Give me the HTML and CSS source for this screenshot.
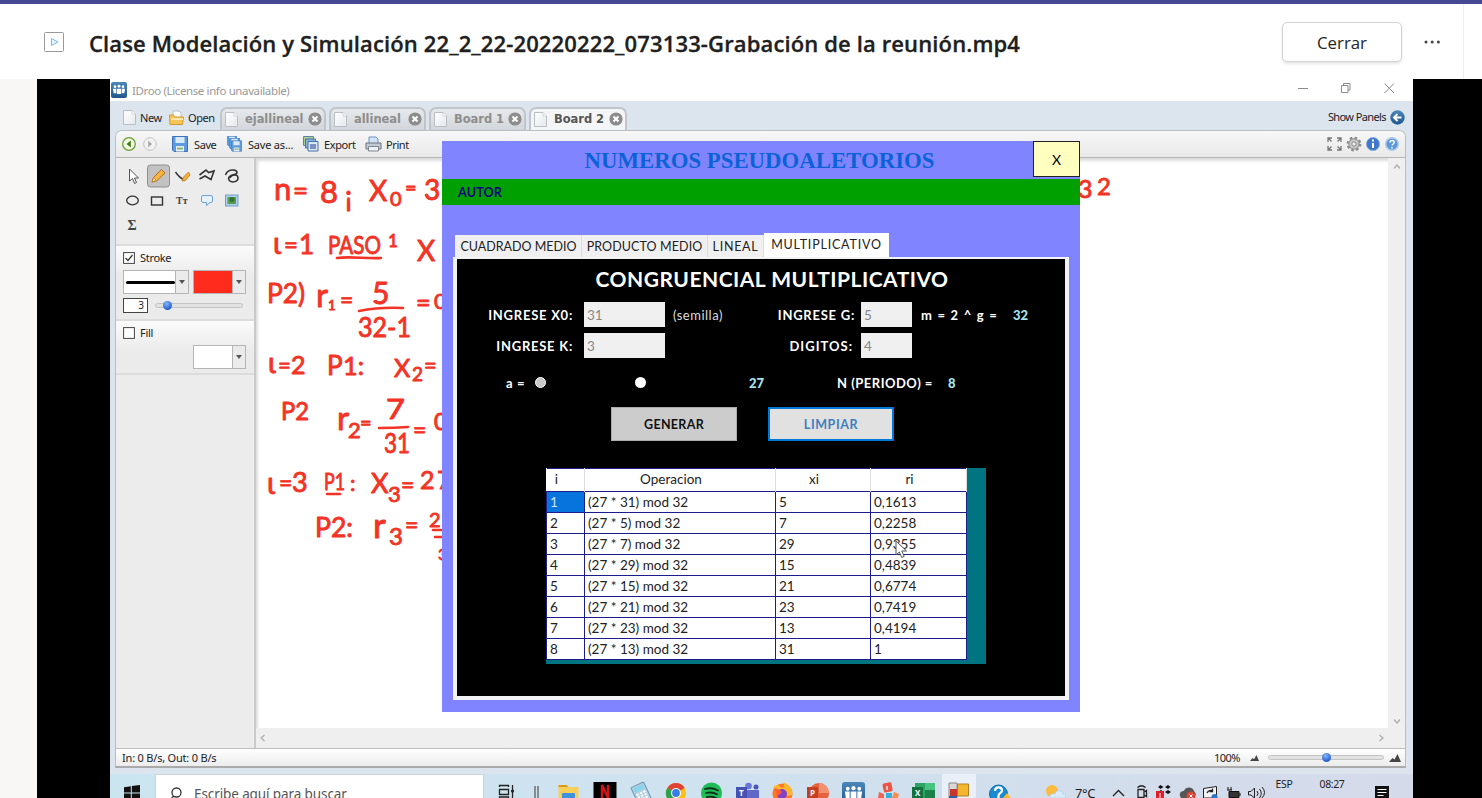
FILE: index.html
```html
<!DOCTYPE html>
<html lang="es">
<head>
<meta charset="utf-8">
<title>Clase Modelación y Simulación</title>
<link rel="stylesheet" href="styles.css">
</head>
<body>
<svg class="defs" width="0" height="0" aria-hidden="true">
  <defs>
    <linearGradient id="blueG" x1="0" y1="0" x2="0" y2="1"><stop offset="0" stop-color="#4b87b9"/><stop offset="1" stop-color="#1f568e"/></linearGradient>
    <linearGradient id="pageG" x1="0" y1="0" x2="1" y2="1"><stop offset="0" stop-color="#fff"/><stop offset="1" stop-color="#e4e8ec"/></linearGradient>
    <symbol id="page" viewBox="0 0 13 15"><path d="M.5.5h8.500l3.500 3.500v10.500H.5z" fill="url(#pageG)" stroke="#b9bec4"/><path d="M9 .5v3.500h3.500" fill="#fff" stroke="#c8ccd0" stroke-width=".8"/></symbol>
    <symbol id="close" viewBox="0 0 14 14"><circle cx="7" cy="7" r="6.600" fill="#8c8c8c"/><path d="M4.500 4.500l5 5m0-5l-5 5" stroke="#fff" stroke-width="2.100"/></symbol>
    <symbol id="people" viewBox="0 0 24 24"><rect width="24" height="24" rx="3" fill="url(#blueG)"/><g fill="#fff"><circle cx="6" cy="7" r="2"/><circle cx="12" cy="6.500" r="2.200"/><circle cx="18" cy="7" r="2"/><path d="M3 10h5v7H4zM9 10h6v8H9zM16 10h5l-1 7h-4z"/></g></symbol>
    <symbol id="floppy" viewBox="0 0 16 16"><path d="M.5.5h15v15H2L.5 14z" fill="#5d9be0" stroke="#3e72b8"/><path d="M3.500 1h9v6h-9z" fill="#d9ebfb"/><path d="M4 10h8v5.500H4z" fill="#e8eef2"/><path d="M5 11.500h6v2H5z" fill="#86b578"/></symbol>
  </defs>
</svg>

<div class="accent"></div>
<header class="head">
  <svg class="head-icon" width="20" height="20" viewBox="0 0 20 20"><rect x=".5" y=".5" width="19" height="19" rx="1" fill="#fff" stroke="#9a9998"/><path d="M7.500 6.500v7l6.500-3.500z" fill="#e4f3fd" stroke="#75bdf2"/></svg>
  <h1 class="head-title">Clase Modelación y Simulación 22_2_22-20220222_073133-Grabación de la reunión.mp4</h1>
  <button class="head-close">Cerrar</button>
  <svg class="head-more" width="18" height="6" viewBox="0 0 18 6"><g fill="#444"><circle cx="3" cy="3" r="1.500"/><circle cx="9.200" cy="3" r="1.500"/><circle cx="15.400" cy="3" r="1.500"/></g></svg>
  <span class="head-rule"></span>
</header>

<main class="stage">
  <div class="video">
    <div class="titlebar">
      <svg width="16" height="16"><use href="#people"/></svg>
      <span class="title-text">IDroo (License info unavailable)</span>
      <svg class="win-controls" width="100" height="12" viewBox="0 0 100 12" fill="none" stroke="#8b8b8b"><path d="M1 6.500h10M44.500 3.500h6.500v7h-6.500z"/><path d="M46.500 3.500v-2h6.500v6.500h-2M87.500 1.500l9.500 9.500m0-9.500l-9.500 9.500"/></svg>
    </div>

    <div class="tabstrip">
      <span class="action"><svg width="13" height="15"><use href="#page"/></svg>New</span>
      <span class="action action-open"><svg width="15" height="15" viewBox="0 0 15 15"><path d="M4 1h6l2 2v8H4z" fill="#fff" stroke="#b9bec4"/><path d="M.5 5h4l1 2h9l-1 7.500H1z" fill="#f7c557" stroke="#d59a2c"/><path d="M2 9h12" stroke="#fde7a8" stroke-width="2"/></svg>Open</span>
      <div class="tab tab-a"><svg width="13" height="15"><use href="#page"/></svg><b>ejallineal</b><svg width="14" height="14"><use href="#close"/></svg></div>
      <div class="tab tab-b"><svg width="13" height="15"><use href="#page"/></svg><b>allineal</b><svg width="14" height="14"><use href="#close"/></svg></div>
      <div class="tab tab-c"><svg width="13" height="15"><use href="#page"/></svg><b>Board 1</b><svg width="14" height="14"><use href="#close"/></svg></div>
      <div class="tab tab-d is-active"><svg width="13" height="15"><use href="#page"/></svg><b>Board 2</b><svg width="14" height="14"><use href="#close"/></svg></div>
      <span class="panels">Show Panels</span>
      <svg class="panels-icon" width="15" height="15" viewBox="0 0 15 15"><circle cx="7.500" cy="7.500" r="7.200" fill="url(#blueG)"/><path d="M11.500 7.500H4.500M7.500 4l-3.500 3.500 3.500 3.500" fill="none" stroke="#fff" stroke-width="1.900"/></svg>
    </div>

    <div class="app">
      <div class="toolbar">
        <svg width="14" height="14" viewBox="0 0 14 14"><circle cx="7" cy="7" r="6.300" fill="#f1f8e4" stroke="#6aa032" stroke-width="1.300"/><path d="M8.800 3.500v7L4.500 7z" fill="#3f7c14"/></svg>
        <svg class="tb-fwd" width="14" height="14" viewBox="0 0 14 14"><circle cx="7" cy="7" r="6.300" fill="#f2f2f2" stroke="#c2c2c2"/><path d="M5.200 3.500v7L9 7z" fill="#a8a8a8"/></svg>
        <span class="tb tb-save"><svg width="16" height="16"><use href="#floppy"/></svg>Save</span>
        <span class="tb tb-saveas"><svg width="15" height="16" viewBox="0 0 15 16"><svg width="10" height="10"><use href="#floppy"/></svg><svg x="2" y="2" width="11" height="11"><use href="#floppy"/></svg><svg x="4" y="4" width="11" height="12"><use href="#floppy"/></svg></svg>Save as...</span>
        <span class="tb tb-export"><svg width="16" height="16" viewBox="0 0 16 16"><path d="M.5.5h10v9H.5z" fill="#a9d08f" stroke="#5f83ad"/><path d="M2.500 3h10v9h-10z" fill="#8ab3e4" stroke="#466fa6"/><path d="M5 5.500h10v9.500H5z" fill="#dbe8f8" stroke="#466fa6"/><path d="M7 8h6v5H7z" fill="#7a8fc4"/></svg>Export</span>
        <span class="tb tb-print"><svg width="17" height="16" viewBox="0 0 17 16"><path d="M4 7V1h7l2 2v4" fill="#cfe2f8" stroke="#6f93bd"/><path d="M1 7h15v6H1z" fill="#c3c9d1" stroke="#6c747e"/><path d="M3.500 10.500h10v4.500h-10z" fill="#eef2f6" stroke="#7d8792"/></svg>Print</span>
        <svg class="tb-right" width="73" height="16" viewBox="0 0 73 16">
          <path d="M2 6V2h4M2 2l3.500 3.500M11 2h4v4M15 2l-3.500 3.500M2 10v4h4M2 14l3.500-3.500M15 10v4h-4M15 14l-3.500-3.500" fill="none" stroke="#777" stroke-width="1.300"/>
          <circle cx="28" cy="8" r="6" fill="#b7b7b7" stroke="#8a8a8a" stroke-width="2.800" stroke-dasharray="2.400 2.300"/><circle cx="28" cy="8" r="5" fill="#c9c9c9" stroke="#929292" stroke-width=".8"/><circle cx="28" cy="8" r="2.200" fill="#eee" stroke="#888"/>
          <circle cx="47" cy="8" r="6.600" fill="#3f78c9" stroke="#8eb0df"/><path d="M47 7v5M47 3.500v2" stroke="#fff" stroke-width="2"/>
          <circle cx="66" cy="8" r="6.300" fill="#5c97dc" stroke="#b3cdec" stroke-width="1.500"/><path d="M64 6.500c0-3 4.300-2.600 4.200 0-.1 1.500-2.100 1.500-2.100 3M66 11v1.500" fill="none" stroke="#fff" stroke-width="1.500"/>
        </svg>
      </div>

      <div class="work">
        <aside class="side">
          <svg class="tools" width="138" height="86" viewBox="116 158 138 86" fill="none" stroke="#333">
            <path d="M129.500 169v12l3-2.500 2 5 2-1-2-4.500h4z" fill="#fff" stroke="#555"/>
            <rect x="147.500" y="165" width="22" height="22" rx="3" fill="#c2c2c2" stroke="#8f8f8f"/>
            <path d="M152 182l1.500-4.500 8-8 3.500 3.500-8.500 8z" fill="#f8b640" stroke="#b96e19"/><path d="M152 182l1.500-4.500 3 3z" fill="#fbe6bd" stroke="#b96e19" stroke-width=".7"/>
            <path d="M175.500 172q4 6 9 8" stroke-width="1.400"/><path d="M182 181l1.500-4 5-5 1.500 3-4.500 5.500z" fill="#f5ae3c" stroke="#b97920" stroke-width=".8"/>
            <path d="M199.500 175l6.500-5 2.500 2.500 5.500-1.500-3 8.500-6-3.500-5.500 3" stroke-width="1.600"/>
            <path d="M225.500 175c1-3 4-5.500 8-5 4.500.5 4.500 4 .5 4.500-3 .5-6.500 2.500-5 5.500s9 2.500 9-2-6-3.500-8-.5" stroke-width="1.600"/>
            <ellipse cx="132.500" cy="200.500" rx="5.800" ry="4.300" stroke-width="1.300"/><rect x="151.500" y="197" width="11" height="8" stroke-width="1.400"/>
            <path d="M203 195.500h8q1.500 0 1.500 1.500v4q0 1.500-1.500 1.500h-1l-3.500 3v-3H203q-1.500 0-1.500-1.500v-4q0-1.500 1.500-1.500z" fill="#e5f2fd" stroke="#6da3d4"/>
            <rect x="225.500" y="195" width="12.500" height="11" fill="#a8d1ef" stroke="#7b9fc4"/><path d="M227.500 197h8.500v7h-8.500z" fill="#5c9a4d" stroke="none"/><circle cx="232" cy="199.500" r="2.500" fill="#2f7136" stroke="none"/>
            <text x="176" y="204" class="tool-tt">Tт</text><text x="127.500" y="230" class="tool-sigma">Σ</text>
          </svg>
          <section class="opt opt-stroke">
            <div class="opt-check"><svg width="12" height="12" viewBox="0 0 12 12"><rect x=".6" y=".6" width="10.800" height="10.800" fill="#fff" stroke="#444"/><path d="M2.500 6l2.500 2.500 4.500-5.500" fill="none" stroke="#333" stroke-width="1.200"/></svg>Stroke</div>
            <div class="pickers">
              <div class="picker"><span class="swatch"><i class="stroke-line"></i></span><span class="arrow"></span></div>
              <div class="picker picker-color"><span class="swatch swatch-red"></span><span class="arrow"></span></div>
            </div>
            <div class="size"><span class="size-num">3</span><span class="track"><i class="knob"></i></span></div>
          </section>
          <section class="opt opt-fill">
            <div class="opt-check"><svg width="12" height="12" viewBox="0 0 12 12"><rect x=".6" y=".6" width="10.800" height="10.800" fill="#fff" stroke="#444"/></svg>Fill</div>
            <div class="picker picker-fill"><span class="swatch"></span><span class="arrow"></span></div>
          </section>
        </aside>

        <div class="board">
          <svg class="ink" width="1131" height="570" viewBox="256 158 1131 570">
            <g class="ink-text">
              <text x="274" y="200" font-size="31">n</text><text x="293" y="200" font-size="26">=</text><text x="320" y="203" font-size="31">8</text><text x="345" y="206" font-size="28">¡</text><text x="369" y="201" font-size="28">X</text><text x="390" y="206" font-size="20">0</text><text x="405" y="195" font-size="20">=</text><text x="424" y="200" font-size="28">3</text>
              <text x="273" y="254" font-size="30">ι</text><text x="284" y="253" font-size="24">=</text><text x="299" y="254" font-size="26">1</text><text x="328" y="254" font-size="25" textLength="53" lengthAdjust="spacingAndGlyphs">PASO</text><text x="388" y="247" font-size="17">1</text><text x="417" y="261" font-size="28">X</text>
              <text x="267" y="303" font-size="27" textLength="38" lengthAdjust="spacingAndGlyphs">P2)</text><text x="316" y="307" font-size="33">r</text><text x="328" y="310" font-size="13">1</text><text x="340" y="308" font-size="23">=</text><text x="372" y="304" font-size="30">5</text><text x="358" y="337" font-size="26" textLength="53" lengthAdjust="spacingAndGlyphs">32-1</text><text x="416" y="312" font-size="25">=</text><text x="434" y="309" font-size="22">0</text>
              <text x="268" y="373" font-size="29">ι</text><text x="278" y="373" font-size="22">=</text><text x="291" y="374" font-size="25">2</text><text x="327" y="375" font-size="26">P</text><text x="343" y="375" font-size="25" textLength="21" lengthAdjust="spacingAndGlyphs">1:</text><text x="394" y="377" font-size="25">X</text><text x="412" y="381" font-size="19">2</text><text x="424" y="373" font-size="22">=</text>
              <text x="281" y="420" font-size="25" textLength="28" lengthAdjust="spacingAndGlyphs">P2</text><text x="337" y="430" font-size="33">r</text><text x="348" y="438" font-size="22">2</text><text x="360" y="430" font-size="20">=</text><text x="386" y="419" font-size="26" textLength="19" lengthAdjust="spacingAndGlyphs">7</text><text x="384" y="453" font-size="27" textLength="26" lengthAdjust="spacingAndGlyphs">31</text><text x="413" y="438" font-size="23">=</text><text x="434" y="430" font-size="23">0</text>
              <text x="267" y="494" font-size="30">ι</text><text x="279" y="491" font-size="23">=</text><text x="292" y="492" font-size="27">3</text><text x="324" y="490" font-size="24" textLength="21" lengthAdjust="spacingAndGlyphs">P1</text><text x="350" y="491" font-size="22">:</text><text x="371" y="493" font-size="27">X</text><text x="388" y="502" font-size="22">3</text><text x="401" y="493" font-size="23">=</text><text x="420" y="489" font-size="25">2</text><text x="437" y="489" font-size="25">7</text>
              <text x="315" y="537" font-size="27" textLength="38" lengthAdjust="spacingAndGlyphs">P2:</text><text x="373" y="538" font-size="35">r</text><text x="389" y="545" font-size="24">3</text><text x="405" y="533" font-size="23">=</text><text x="429" y="527" font-size="20">2</text><text x="438" y="560" font-size="16">3</text>
              <text x="1078" y="198" font-size="25">3</text><text x="1097" y="195" font-size="24">2</text>
            </g>
            <path d="M337 258c13-2 30 1 44 0M359 311q20-4 44-3M379 428q15 0 29-1M327 494h13M433 530h8M435 537h7" fill="none" stroke="#f33325" stroke-width="2.600" stroke-linecap="round"/>
          </svg>
          <div class="vscroll"><svg width="8" height="5" viewBox="0 0 8 5"><path d="M1 4.500l3-3.500 3 3.500"/></svg><svg width="8" height="5" viewBox="0 0 8 5"><path d="M1 .5l3 3.500 3-3.500"/></svg></div>
          <div class="hscroll"><svg width="5" height="8" viewBox="0 0 5 8"><path d="M4.500 1L1 4l3.500 3"/></svg><svg width="5" height="8" viewBox="0 0 5 8"><path d="M.5 1L4 4 .5 7"/></svg></div>
        </div>
      </div>

      <div class="status">
        <span>In: 0 B/s, Out: 0 B/s</span>
        <span class="zoom-val">100%</span>
        <svg class="zoom-out" width="9" height="6" viewBox="0 0 12 8"><path d="M0 8l3.500-4 2 1.500L8.500 0 12 8z" fill="#444"/></svg>
        <span class="zoom-track"><i class="knob"></i></span>
        <svg class="zoom-in" width="12" height="8" viewBox="0 0 12 8"><path d="M0 8l3.500-4 2 1.500L8.500 0 12 8z" fill="#444"/></svg>
      </div>
    </div>

    <div class="taskbar">
      <svg class="winlogo" width="16" height="16" viewBox="0 0 16 16"><path d="M0 2.200l6.800-1v6.300H0zM7.800 1L16 0v7.500H7.800zM0 8.500h6.800v6.300L0 13.800zM7.800 8.500H16V16l-8.200-1z" fill="#111"/></svg>
      <div class="search"><svg width="13" height="15" viewBox="0 0 13 15" fill="none" stroke="#333" stroke-width="1.300"><circle cx="7.500" cy="5.500" r="4.500"/><path d="M4.500 9L1 13.500"/></svg>Escribe aquí para buscar</div>
      <svg class="icons" width="929" height="24" viewBox="484 774 929 24">
        <path d="M499.500 787v-1.500h9V787M499.500 789.500h9v5h-9zM499.500 798v-1h9v1M512.500 785v13" fill="none" stroke="#222" stroke-width="1.300"/><circle cx="512.500" cy="791" r="1.600" fill="#222"/>
        <path d="M535 786v12M538 786v12" stroke="#555" stroke-width="1.200"/>
        <path d="M558.500 785h8l2 2h10v11h-20z" fill="#f9ce59"/><path d="M558.500 785h8l2 2h-10z" fill="#d99c1e"/><path d="M562 798v-4q0-1 1-1h11q1 0 1 1v4z" fill="#3d94dc"/>
        <path d="M593.500 782h23v16h-23z"/><path d="M602 798v-13l6 13v-13" fill="none" stroke="#d31219" stroke-width="2.400"/>
        <g transform="rotate(-25 641 793)"><rect x="634" y="784" width="14" height="20" rx="1" fill="#b1cee0" stroke="#6e9ab5"/><path d="M636 786h10v4h-10z" fill="#86d4ed"/><path d="M636 793h10M636 796h10M636 799h10" stroke="#fff" stroke-width="2" stroke-dasharray="2.500 1.200"/></g>
        <circle cx="676" cy="793" r="10" fill="#fbc116"/><path d="M676 793L667.300 788A10 10 0 0 1 684.700 788z" fill="#df4334"/><path d="M676 793l-8.700-5a10 10 0 0 0 3.700 14z" fill="#2ca14c"/><circle cx="676" cy="793" r="5" fill="#fff"/><circle cx="676" cy="793" r="3.900" fill="#367ce8"/>
        <circle cx="711.500" cy="793" r="10.500" fill="#1ebd57"/><path d="M705 789q7-2 13 1.500M706 793q6-1.500 11 1.300M707 797q5-1 9 1" fill="none" stroke="#12301c" stroke-width="1.800" stroke-linecap="round"/>
        <circle cx="748.500" cy="786" r="3.300" fill="#6b74d8"/><circle cx="756" cy="787" r="2.500" fill="#4b53bc"/><path d="M743 790h11v8h-11zM754 790h5v8h-5z" fill="#6069c8"/><path d="M736 787h11v11h-11z" fill="#4651b4"/><text x="739" y="796" class="ic-letter" font-size="8">T</text>
        <circle cx="782.500" cy="793.500" r="10" fill="#ff7627"/><path d="M773 788c4-6 7-1 9 0 3-1 2-5 1-6 6 2 10 7 9 13l-9 2z" fill="#ffb82c"/><circle cx="782" cy="794" r="5" fill="#8440c8"/><path d="M774 788q6 1 8 4l-4 4z" fill="#ff5e31"/>
        <circle cx="819" cy="793" r="10" fill="#e5623d"/><path d="M819 783a10 10 0 0 1 10 10h-10z" fill="#f29071"/><path d="M807 787h11v11h-11z" fill="#c43e1f"/><text x="810" y="796" class="ic-letter" font-size="8">P</text>
        <svg x="842" y="782" width="23" height="23"><use href="#people"/></svg>
        <rect x="883" y="783" width="9" height="9" rx="1.500" transform="rotate(-12 887 787)" fill="#e95647"/><path d="M879 792l5 2v4h-6z" fill="#ef6551"/><path d="M886 793h6v5h-6z" fill="#35b0dc"/><path d="M894 792l5 2-1 4h-6z" fill="#f28c51"/><path d="M887 786v4" stroke="#fff" stroke-width="1.200"/>
        <path d="M915 783h20v15h-20z" fill="#2ba566"/><path d="M925 783h10v7h-10z" fill="#47c481"/><path d="M925 790h10v8h-10z" fill="#1b824b"/><path d="M912 787h11v11h-11z" fill="#13713d"/><text x="915" y="796" class="ic-letter" font-size="8">X</text>
        <path d="M942 774h34v24h-34z" fill="#eaf0f7"/><path d="M949 783h8v15h-8z" fill="#d9d9d9" stroke="#888"/><path d="M950 789h7v7h-7z" fill="#c4362e"/><path d="M957.500 784h11v12h-11z" fill="#f3b630" stroke="#b38020"/><path d="M949 796h8v2h-8z" fill="#2b62a7"/>
        <circle cx="998.500" cy="794" r="9" fill="#1a8bd0" stroke="#0b6eab"/><path d="M995 791c0-5 7-4.500 7-.5 0 2.500-3.500 2.500-3.500 5.500v2" fill="none" stroke="#fff" stroke-width="2.200"/><path d="M1003 798l4-5 4 5z" fill="#f4bb2b"/>
        <circle cx="1052" cy="791" r="6" fill="#fbbb3e"/><path d="M1050 798c-1-4 3-5 5-4 1-5 8-4 8 0 4 1 3 4 2 4z" fill="#d7ecfb" stroke="#aacbe5" stroke-width=".7"/>
        <path d="M1113 796l5.500-5.500 5.500 5.500" fill="none" stroke="#222" stroke-width="1.400"/>
        <path d="M1137.500 787.500q4-3.500 8 0M1138 789.500h6v8h-6zM1144 792l2.500-1.500v6l-2.500-1.500" fill="none" stroke="#222" stroke-width="1.300"/>
        <path d="M1158 787l2.500-2 3 2-3 2zM1165 787l3-2 2.500 2-2.500 2zM1158 792l3-2 3 2-3 2zM1165 792l3-2 3 2-3 2z" fill="#111"/><path d="M1156 791h8v7h-8z" fill="#de1f2a"/><path d="M1160 793v5" stroke="#fff"/>
        <path d="M1180 796c-1-4 2-5 4-5 2-5 9-4 10 0l2 3-2 4h-13z" fill="#555"/><circle cx="1191" cy="796" r="4.500" fill="#dc4638"/><path d="M1189.500 794.500l3 3m0-3l-3 3" stroke="#fff"/>
        <path d="M1203.500 788.500l13-2v11.500h-13z" fill="#f2f3f6" stroke="#222"/><path d="M1207 793q2-4 6-2M1212.500 788.500v3h-3" fill="none" stroke="#222" stroke-width="1.300"/><circle cx="1214.500" cy="797" r="3" fill="#2b76c6"/>
        <path d="M1229 791.500h10v6h-10z" fill="#333" stroke="#111"/><path d="M1240 793v3M1228 787v3M1231 787v3M1227 790h5" stroke="#111"/>
        <path d="M1248.500 791.500h2.500l3.500-3.500v10l-3.500-3h-2.500zM1257 791q2 2.500 0 5M1259.500 789q3.500 4 0 9M1262 787q5 5.500 0 11" fill="none" stroke="#222"/>
        <path d="M1375 786h14v12h-14z" fill="#111"/><path d="M1377.500 789.500h9M1377.500 792.500h9M1377.500 795.500h6" stroke="#fff"/>
      </svg>
      <span class="tray tray-temp">7°C</span>
      <span class="tray tray-lang">ESP<br>LAA</span>
      <span class="tray tray-clock">08:27<br>22/2/2022</span>
    </div>

    <section class="modal">
      <div class="modal-head"><h2>NUMEROS PSEUDOALETORIOS</h2><button class="modal-x">X</button></div>
      <nav class="menu">AUTOR</nav>
      <div class="mtabs">
        <span class="mtab mtab-1">CUADRADO MEDIO</span><span class="mtab mtab-2">PRODUCTO MEDIO</span><span class="mtab mtab-3">LINEAL</span><span class="mtab mtab-4">MULTIPLICATIVO</span>
      </div>
      <div class="panel">
        <h3>CONGRUENCIAL MULTIPLICATIVO</h3>
        <div class="row row-1">
          <label class="lab">INGRESE X0:</label><span class="field">31</span><span class="hint">(semilla)</span>
          <label class="lab">INGRESE G:</label><span class="field">5</span><span class="formula">m = 2 ^ g =</span><b class="result">32</b>
        </div>
        <div class="row row-2">
          <label class="lab">INGRESE K:</label><span class="field">3</span><span></span>
          <label class="lab lab-dig">DIGITOS:</label><span class="field">4</span>
        </div>
        <div class="row-3">
          <span class="a-eq">a =</span><i class="radio is-on"></i><i class="radio"></i><b class="result">27</b><span class="period">N (PERIODO) =</span><b class="result">8</b>
        </div>
        <div class="buttons"><button class="btn">GENERAR</button><button class="btn btn-focus">LIMPIAR</button></div>
        <div class="grid-box">
          <table class="grid">
            <colgroup><col class="c1"><col class="c2"><col class="c3"><col class="c4"></colgroup>
            <thead><tr><th>i</th><th>Operacion</th><th>xi</th><th>ri</th></tr></thead>
            <tbody>
              <tr><td class="sel">1</td><td>(27 * 31) mod 32</td><td>5</td><td>0,1613</td></tr>
              <tr><td>2</td><td>(27 * 5) mod 32</td><td>7</td><td>0,2258</td></tr>
              <tr><td>3</td><td>(27 * 7) mod 32</td><td>29</td><td>0,9355</td></tr>
              <tr><td>4</td><td>(27 * 29) mod 32</td><td>15</td><td>0,4839</td></tr>
              <tr><td>5</td><td>(27 * 15) mod 32</td><td>21</td><td>0,6774</td></tr>
              <tr><td>6</td><td>(27 * 21) mod 32</td><td>23</td><td>0,7419</td></tr>
              <tr><td>7</td><td>(27 * 23) mod 32</td><td>13</td><td>0,4194</td></tr>
              <tr><td>8</td><td>(27 * 13) mod 32</td><td>31</td><td>1</td></tr>
            </tbody>
          </table>
        </div>
      </div>
      <svg class="cursor" width="13" height="19" viewBox="0 0 13 19"><path d="M1 1v14l3.300-3 2.400 5.500 2.500-1.100L6.800 11h4.700z" fill="#fff" stroke="#555"/></svg>
    </section>
  </div>
</main>
</body>
</html>
```

FILE: styles.css
```css
* { box-sizing: border-box; }
html, body { margin: 0; height: 798px; overflow: hidden; }
body { background: #f9f7f6; font-family: "Noto Sans", sans-serif; color: #222; display: flex; flex-direction: column; }
h1, h2, h3 { margin: 0; }
button { font: inherit; padding: 0; }
svg { flex: none; display: block; }
.defs { position: absolute; }

/* Viewer header */
.accent { height: 4px; background: #464891; flex: none; }
.head { height: 75px; flex: none; background: #fff; display: flex; align-items: center; padding-left: 44px; }
.head-icon { margin-right: 25px; }
.head-title { width: 1193px; margin-top: 2px; font: 600 22px "Open Sans", sans-serif; white-space: nowrap; color: #202020; letter-spacing: .13px; -webkit-text-stroke: .3px #202020; }
.head-close { width: 120px; height: 40px; background: #fff; border: 1px solid #d4d3d2; border-radius: 5px; box-shadow: 0 2px 3px rgba(0,0,0,.1); font: 16.800px "Open Sans", sans-serif; color: #242424; padding-top: 2px; }
.head-more { margin-left: 21px; }
.head-rule { width: 1px; height: 75px; background: #eee; margin-left: 22px; }

/* Recorded screen */
.stage { height: 719px; margin-left: 37px; background: #000; padding-left: 73px; overflow: hidden; }
.video { position: relative; width: 1303px; height: 719px; background: #dce4ed; overflow: hidden; font-family: "Noto Sans", sans-serif; font-size: 11px; display: flex; flex-direction: column; }
.titlebar { height: 22px; flex: none; background: #fff; display: flex; align-items: center; padding-left: 1px; }
.title-text { margin-left: 5px; color: #999; font: 11.500px "Noto Sans", sans-serif; letter-spacing: -.38px; flex: 1; }
.win-controls { margin-right: 16px; margin-bottom: 4px; }

.tabstrip { height: 29px; flex: none; display: flex; align-items: flex-end; padding-left: 13px; }
.action { display: flex; align-items: center; height: 25px; gap: 4px; width: 46px; white-space: nowrap; letter-spacing: -.4px; }
.action-open { width: 51px; letter-spacing: -.4px; }
.tab { height: 23px; border: 2px solid #c0c5ca; border-bottom: 0; border-radius: 7px 7px 0 0; background: linear-gradient(#e6e9ec, #d2d6da); display: flex; align-items: center; padding: 0 2.500px 1px 3px; gap: 7px; color: #8d8d8d; white-space: nowrap; margin-right: 3px; }
.tab b { font: bold 11.500px "DejaVu Sans", sans-serif; flex: 1; min-width: 0; margin-right: -6px; letter-spacing: -.05px; }
.tab-a { width: 106px; }
.tab-b { width: 97px; }
.tab-c { width: 97px; }
.tab-d { width: 98px; }
.tab.is-active { background: #f3f5f7; color: #555; }
.panels { margin-left: auto; height: 25px; line-height: 24px; margin-right: 4px; letter-spacing: -.6px; }
.panels-icon { margin: 0 8px 5px 0; }

.app { margin: 0 7px 0 5px; height: 638px; flex: none; border: 1px solid #b9bec3; border-bottom: 2px solid #aaa; border-radius: 7px 7px 0 0; overflow: hidden; display: flex; flex-direction: column; background: #ededed; }
.toolbar { height: 27px; flex: none; display: flex; align-items: center; padding-left: 6px; background: linear-gradient(#f7f7f7, #e9e9e9); border-bottom: 1px solid #b4b4b4; letter-spacing: -.4px; }
.tb-fwd { margin-left: 7px; }
.tb { display: flex; align-items: center; white-space: nowrap; gap: 6px; }
.tb-save { margin-left: 15px; width: 55px; }
.tb-saveas { width: 76px; letter-spacing: -.2px; }
.tb-export { gap: 5px; width: 62px; }
.tb-print { gap: 4px; }
.tb-right { margin-left: auto; margin-right: 6px; }
.work { height: 590px; flex: none; display: flex; }
.side { width: 138px; flex: none; background: #ececec; }
.tool-tt { font: bold 10px "Liberation Serif", serif; fill: #444; stroke: none; }
.tool-sigma { font: bold 14px "Liberation Serif", serif; fill: #444; stroke: none; }
.opt { border-top: 2px solid #dcdcdc; background: linear-gradient(#fbfbfb, #ebebeb 30px); padding: 4px 7px 0; }
.opt-check { display: flex; align-items: center; gap: 5px; height: 15px; letter-spacing: -.3px; }
.opt-stroke { height: 75px; }
.opt-fill { height: 56px; border-bottom: 2px solid #dcdcdc; }
.pickers { display: flex; gap: 4px; margin-top: 5px; }
.picker { display: flex; width: 66px; height: 24px; border: 1px solid #b5b5b5; background: #fff; }
.picker-color, .picker-fill { width: 53px; }
.picker-fill { margin: 5px 0 0 70px; }
.swatch { flex: 1; display: flex; align-items: center; }
.swatch-red { background: #ff2c1d; }
.stroke-line { width: 49px; height: 3px; border-radius: 2px; margin-left: 2px; background: #000; }
.arrow { width: 13px; background: #ebebeb; border-left: 1px solid #b5b5b5; display: grid; place-items: center; }
.arrow::after { content: ""; border: 3.5px solid transparent; border-top: 4px solid #555; border-bottom: 0; }
.size { display: flex; align-items: center; margin-top: 4px; }
.size-num { width: 25px; height: 15px; border: 1px solid #444; background: #fff; text-align: right; padding-right: 3px; font-size: 10px; line-height: 13px; }
.track { width: 88px; height: 5px; margin-left: 7px; padding-left: 7px; display: flex; align-items: center; background: #e2e2e2; border: 1px solid #c3c3c3; border-radius: 3px; }
.knob { width: 9px; height: 9px; border-radius: 50%; background: radial-gradient(circle at 40% 30%, #86b5fa, #2260cf 70%); flex: none; }

.board { flex: 1; background: #fff; display: grid; grid-template: 570px 20px / 1fr 17px; border-left: 2px solid #c9c9c9; box-shadow: inset 2px 3px 3px #ddd; overflow: hidden; }
.ink-text { font-family: Lato, sans-serif; font-weight: 400; fill: #f33325; stroke: #f33325; stroke-width: .9px; stroke-linejoin: round; }
.vscroll, .hscroll { background: #efefef; display: flex; justify-content: space-between; align-items: center; }
.vscroll { flex-direction: column; padding: 6px 0 4px; }
.hscroll { padding: 0 21px 0 4px; grid-column: 1 / 3; }
.vscroll path, .hscroll path { fill: none; stroke: #aaa; stroke-width: 1.2px; }
.status { height: 18px; flex: none; display: flex; align-items: center; background: linear-gradient(#fff, #ececec); border-top: 1px solid #c0c0c0; padding: 0 4px 0 6px; letter-spacing: -.2px; }
.zoom-val { margin-left: auto; letter-spacing: -.5px; }
.zoom-out { margin: 0 9px 0 10px; }
.zoom-in { margin-left: 5px; }
.zoom-track { width: 116px; height: 5px; display: flex; align-items: center; justify-content: center; border: 1px solid #c3c3c3; border-radius: 3px; background: #e2e2e2; }

.taskbar { margin-top: 6px; height: 40px; flex: none; display: flex; background: linear-gradient(90deg, #cbe5f0, #cfe2ef 45%, #d5daea); position: relative; }
.winlogo { margin: 11px 15px 0 14px; }
.search { width: 329px; height: 40px; background: #fff; border: 1px solid #cdd4d9; display: flex; align-items: center; padding-left: 13px; gap: 12px; font-size: 13.5px; color: #555; letter-spacing: -.1px; }
.ic-letter { font-family: "Open Sans", sans-serif; font-weight: bold; fill: #fff; }
.tray { position: absolute; font-size: 10.5px; line-height: 21px; text-align: center; letter-spacing: -.4px; color: #222; top: 0; }
.tray-temp { left: 965px; top: 9px; font-size: 13px; }
.tray-lang { left: 1164px; width: 20px; }
.tray-clock { left: 1195px; width: 54px; }

/* Generator window, floating over the board */
.modal { position: absolute; left: 332px; top: 62px; width: 638px; height: 571px; background: #8085ff; font-family: Lato, sans-serif; display: flex; flex-direction: column; }
.modal-head { height: 38px; display: flex; flex: none; }
.modal h2 { width: 591px; padding-left: 44px; text-align: center; font: bold 22.8px/39px "Liberation Serif", serif; color: #0b62d8; white-space: nowrap; }
.modal-x { width: 47px; height: 36px; background: #ffffc0; border: 1.5px solid #222; font: 14px Lato, sans-serif; }
.menu { height: 26px; flex: none; background: #00a000; color: #000080; font: bold 12.5px/27px Lato, sans-serif; padding-left: 16px; letter-spacing: .2px; }
.mtabs { height: 52px; flex: none; display: flex; align-items: flex-end; padding-left: 13px; }
.mtab { height: 22px; background: #f0f0f0; border-right: 1px solid #ddd; font-size: 12.5px; line-height: 23px; text-align: center; white-space: nowrap; color: #222; }
.mtab-1 { width: 127px; padding-left: 1px; }
.mtab-2 { width: 126px; letter-spacing: .1px; }
.mtab-3 { width: 56px; letter-spacing: .7px; }
.mtab-4 { width: 125px; height: 24px; background: #fff; border: 0; letter-spacing: .8px; }
.panel { margin: 0 11px; height: 443px; flex: none; border: 4px solid #f2f2f4; border-top-width: 2px; background: #000; color: #fff; }
.panel h3 { height: 43px; padding-left: 22px; text-align: center; font: bold 21px/40px Lato, sans-serif; letter-spacing: .5px; }
.row { display: grid; height: 31px; align-items: start; font-weight: bold; font-size: 13px; line-height: 26px; }
.row-1 { grid-template-columns: 116px 11px 81px 8px 58px 124px 6px 51px 9px 83px 9px 30px; }
.row-2 { grid-template-columns: 116px 11px 81px 8px 58px 122px 8px 51px; }
.row > :nth-child(2) { grid-column: 3; }
.row > :nth-child(3) { grid-column: 5; }
.row > :nth-child(4) { grid-column: 6; }
.row > :nth-child(5) { grid-column: 8; }
.row > :nth-child(6) { grid-column: 10; }
.row > :nth-child(7) { grid-column: 12; }
.row > * { white-space: nowrap; }
.lab { text-align: right; letter-spacing: .75px; }
.row .lab-dig { letter-spacing: 1px; }
.formula { word-spacing: 2.4px; }
.field { height: 25px; background: #f0f0f0; color: #888; font-weight: normal; font-size: 13.5px; padding-left: 3px; }
.hint { font-weight: normal; color: #ddd; letter-spacing: .5px; }
.result { color: #a9e3ee; font-size: 13px; }
.row-3 { height: 43px; display: grid; align-items: center; grid-template-columns: 29px 100px 114px 88px 111px 20px; padding: 0 0 6px 49px; font-weight: bold; font-size: 13px; white-space: nowrap; }
.a-eq { letter-spacing: .6px; }
.period { letter-spacing: .5px; }
.radio { width: 11px; height: 11px; border-radius: 50%; background: #fff; }
.is-on { background: #c9c9c9; border: 1px solid #fff; }
.buttons { display: flex; gap: 31px; padding-left: 154px; height: 61px; }
.btn { width: 126px; height: 34px; background: #ccc; border: 1px solid #aaa; font: bold 12.5px Lato, sans-serif; letter-spacing: .3px; color: #111; }
.btn-focus { border: 2px solid #0078d7; background: #e1e1e1; color: #3f7fbd; letter-spacing: .6px; }
.grid-box { margin-left: 89px; width: 440px; height: 196px; background: #007480; }
.grid { width: 420px; table-layout: fixed; border-collapse: collapse; color: #222; background: #fff; font-size: 13.5px; border-top: 1px solid #1c1c8c; }
.c1 { width: 38px; } .c2 { width: 191px; } .c3 { width: 95px; } .c4 { width: 96px; }
.grid tr { height: 21px; }
.grid thead tr { height: 23px; }
.grid th { font-weight: normal; padding: 0 18px 2px 0; border-right: 1px solid #ddd; }
.grid td { padding: 0 0 0 3px; border: 1px solid #1c1c8c; line-height: 18px; white-space: nowrap; }
.grid .sel { background: #0674dc; color: #cfe6fa; }
.cursor { position: absolute; left: 453px; top: 399px; }
```
